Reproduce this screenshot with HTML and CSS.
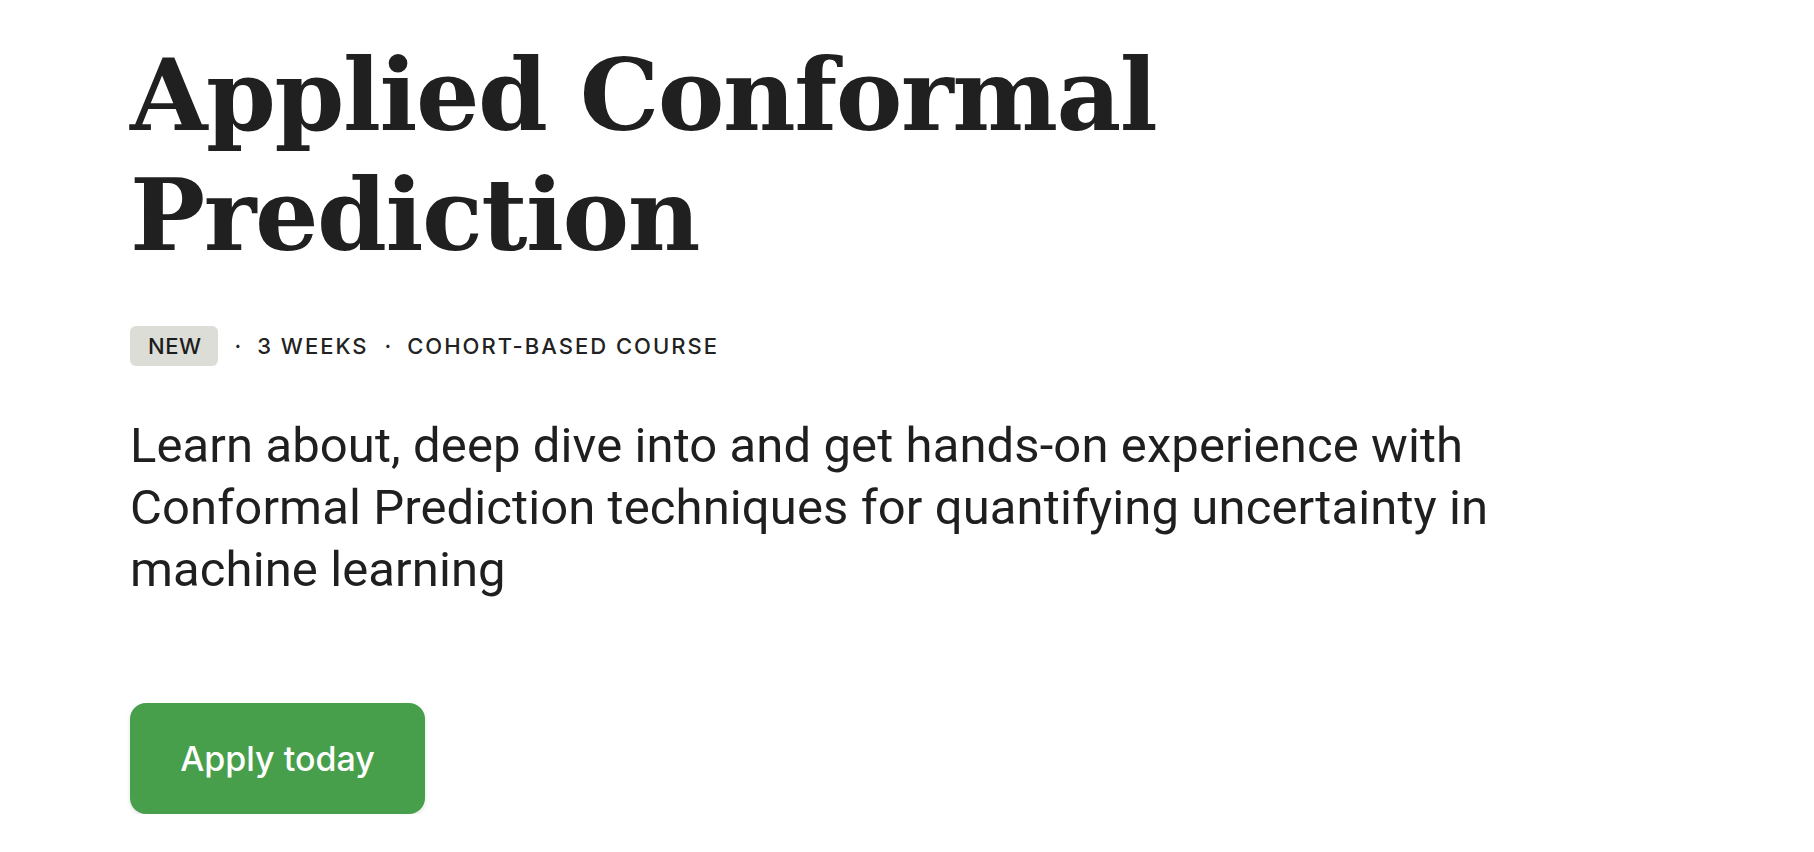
FILE: index.html
```html
<!DOCTYPE html>
<html lang="en">
<head>
<meta charset="utf-8">
<title>Applied Conformal Prediction</title>
<link rel="stylesheet" href="styles.css">
</head>
<body>
<main class="hero">
  <h1 class="hero-title">Applied Conformal<br>Prediction</h1>
  <div class="meta">
    <span class="badge">NEW</span>
    <span class="dot">·</span>
    <span class="meta-item">3 WEEKS</span>
    <span class="dot">·</span>
    <span class="meta-item">COHORT-BASED COURSE</span>
  </div>
  <p class="hero-desc">Learn about, deep dive into and get hands-on experience with Conformal Prediction techniques for quantifying uncertainty in machine learning</p>
  <a class="apply-btn" href="#">Apply today</a>
</main>
</body>
</html>
```
FILE: styles.css
```css
html, body {
  margin: 0;
  padding: 0;
  background: #ffffff;
}
body {
  font-family: Inter, "Noto Sans", sans-serif;
  color: #1f1f1f;
}
.hero {
  padding: 35px 0 0 130px;
  display: flex;
  flex-direction: column;
  align-items: flex-start;
}
.hero-title {
  margin: 0;
  font-family: "DejaVu Serif", "Liberation Serif", serif;
  font-weight: 700;
  font-size: 100px;
  line-height: 120px;
  letter-spacing: -1.5px;
  color: #202020;
}
.meta {
  margin-top: 51px;
  display: flex;
  align-items: center;
  gap: 16px;
  font-size: 22px;
  font-weight: 500;
  letter-spacing: 2px;
  color: #222222;
}
.badge {
  background: #dcddd6;
  border-radius: 6px;
  height: 40px;
  padding: 0 17px 0 18px;
  display: flex;
  align-items: center;
  color: #1c1c1c;
  letter-spacing: 0.5px;
}
.dot {
  letter-spacing: 0;
}
.hero-desc {
  margin: 49px 0 0 0;
  max-width: 1420px;
  font-family: Roboto, Inter, sans-serif;
  font-size: 49px;
  line-height: 62px;
  letter-spacing: 0.1px;
  font-weight: 400;
  color: #1f1f1f;
}
.apply-btn {
  margin-top: 102px;
  width: 295px;
  height: 111px;
  box-sizing: border-box;
  display: flex;
  align-items: center;
  justify-content: center;
  background: #489f4b;
  color: #ffffff;
  border-radius: 16px;
  font-size: 34px;
  font-weight: 500;
  text-decoration: none;
  box-shadow: 0 2px 4px rgba(0, 0, 0, 0.12);
}
```
